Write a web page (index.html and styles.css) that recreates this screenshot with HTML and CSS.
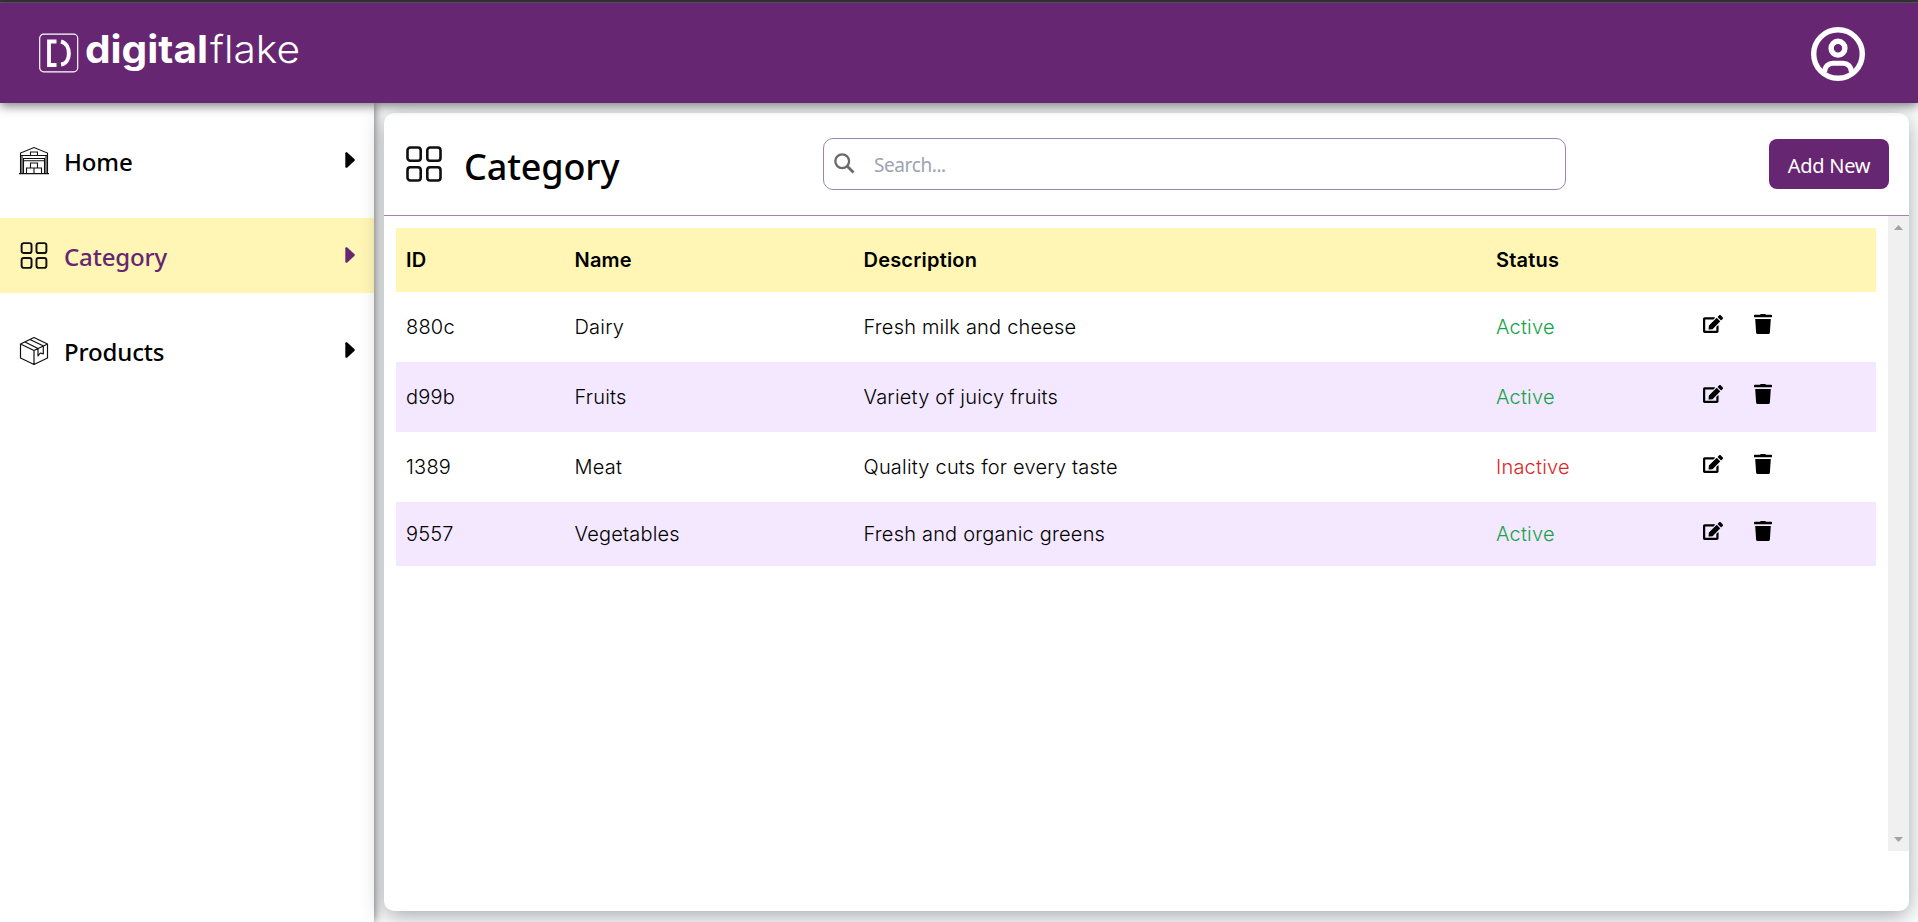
FILE: index.html
```html
<!DOCTYPE html>
<html lang="en">
<head>
<meta charset="utf-8">
<title>Category</title>
<link rel="stylesheet" href="styles.css">
</head>
<body>
<svg class="defs" width="0" height="0">
  <symbol id="grid" viewBox="0 0 36 36"><g fill="none" stroke="#101010" stroke-width="2.600"><rect x="1.500" y="1.500" width="13.200" height="13.200" rx="2.800"/><rect x="21.300" y="1.500" width="13.200" height="13.200" rx="2.800"/><rect x="1.500" y="21.300" width="13.200" height="13.200" rx="2.800"/><rect x="21.300" y="21.300" width="13.200" height="13.200" rx="2.800"/></g></symbol>
  <symbol id="edit" viewBox="0 0 576 512"><path d="M402.6 83.2l90.2 90.2c3.800 3.800 3.800 10 0 13.800L274.400 405.600l-92.800 10.300c-12.400 1.400-22.900-9.100-21.500-21.500l10.300-92.800L388.800 83.200c3.800-3.800 10-3.800 13.800 0zm162-22.900l-48.800-48.800c-15.200-15.200-39.900-15.200-55.200 0l-35.400 35.400c-3.800 3.800-3.800 10 0 13.800l90.200 90.200c3.800 3.800 10 3.800 13.800 0l35.400-35.400c15.200-15.300 15.200-40 0-55.200zM384 346.200V448H64V128h229.800c3.200 0 6.200-1.300 8.500-3.500l40-40c7.600-7.600 2.200-20.500-8.500-20.500H48C21.500 64 0 85.500 0 112v352c0 26.500 21.500 48 48 48h352c26.500 0 48-21.500 48-48V306.200c0-10.700-12.900-16-20.500-8.500l-40 40c-2.200 2.300-3.500 5.300-3.500 8.500z"/></symbol>
  <symbol id="trash" viewBox="0 0 18 20"><path d="M6 .8Q6.200 0 7 0h4q.8 0 1 .8h5.200q.8 0 .8.700v1.200q0 .6-.8.600H.800Q0 3.300 0 2.700V1.500Q0 .8.800.8ZM1.200 5h15.600l-.9 13.500Q15.800 20 14.300 20H3.700Q2.200 20 2.100 18.500Z"/></symbol>
  <symbol id="caret" viewBox="0 0 10 16"><path d="M.3 1.300C.3.200 1.500-.2 2.300.500L9.300 6.900q1 1 0 2L2.300 15.500C1.500 16.200.3 15.800.3 14.700Z" fill="currentColor"/></symbol>
</svg>
<div class="strip"></div>
<header class="topbar">
  <svg class="logo" width="270" height="64" viewBox="0 -12 270 64">
    <rect x=".7" y="2.200" width="38" height="37.600" rx="4" fill="none" stroke="#fff" stroke-width="1.200"/>
    <path d="M17.500 9.500H10V33H17.500" fill="none" stroke="#fff" stroke-width="3.800"/>
    <path d="M22 9.500C32.500 12 32.500 31 22 32.500" fill="none" stroke="#fff" stroke-width="4"/>
    <text class="logo-bold" x="46" y="31" textLength="123" lengthAdjust="spacingAndGlyphs">digital</text>
    <text class="logo-light" x="171" y="31" textLength="90" lengthAdjust="spacingAndGlyphs">flake</text>
  </svg>
  <svg class="avatar" width="54" height="54" viewBox="0 0 54 54" fill="none" stroke="#fff">
    <circle cx="27" cy="27" r="24.300" stroke-width="5.400"/>
    <circle cx="27" cy="21.200" r="6.900" stroke-width="5.400"/>
    <path d="M13.500 45C14 39 17.500 36.200 22 36.200H32C36.500 36.200 40 39 40.500 45" stroke-width="5"/>
  </svg>
</header>
<div class="body">
  <nav class="sidebar">
    <a class="item">
      <svg class="item-icon" width="30" height="30" viewBox="0 0 30 30" fill="none" stroke="#111" stroke-width="1.100"><path d="M1.500 27.500V7L15 1.500 28.500 7V27.500M0 27.600H30M1.500 9.500H28.500M4.500 27V12.500H25.500V27M4.500 14.800H25.500M11.500 9V6H18.500V9M11.500 22V17H18.500V22M7.500 27V22H22.500V27M15 22V27M3 10V27M27 10V27"/></svg>
      <span class="label">Home</span><svg class="caret" width="10" height="16"><use href="#caret"/></svg>
    </a>
    <a class="item active">
      <svg class="item-icon" width="30" height="27"><use href="#grid"/></svg>
      <span class="label">Category</span><svg class="caret" width="10" height="16"><use href="#caret"/></svg>
    </a>
    <a class="item">
      <svg class="item-icon" width="30" height="30" viewBox="0 0 30 30" fill="none" stroke="#111" stroke-width="1.200" stroke-linejoin="round"><path d="M15 1.500 28.500 8V22L15 28.500 1.500 22V8ZM1.500 8 15 14.500 28.500 8M15 14.500V28.500M11 3.500 24.500 10M6 6 19 12.500M19 12.700V20L21.300 17 24.300 17.800V10.200"/></svg>
      <span class="label products">Products</span><svg class="caret" width="10" height="16"><use href="#caret"/></svg>
    </a>
  </nav>
  <main class="main">
    <section class="card">
      <div class="card-head">
        <svg class="title-icon" width="36" height="36"><use href="#grid"/></svg>
        <h1 class="title">Category</h1>
        <div class="search">
          <svg width="21" height="21" viewBox="0 0 21 21" fill="none" stroke="#6b6b6b" stroke-width="2.300"><circle cx="8.200" cy="8.200" r="6.900"/><path d="M13 13 19.500 19.500" stroke-width="2.800"/></svg>
          <span class="placeholder">Search...</span>
        </div>
        <button class="add">Add New</button>
      </div>
      <div class="scroller">
        <div class="table">
          <div class="row head"><span>ID</span><span>Name</span><span>Description</span><span>Status</span><span></span></div>
          <div class="row"><span>880c</span><span>Dairy</span><span>Fresh milk and cheese</span><span class="on">Active</span><span class="actions"><svg class="edit"><use href="#edit"/></svg><svg class="trash"><use href="#trash"/></svg></span></div>
          <div class="row alt"><span>d99b</span><span>Fruits</span><span>Variety of juicy fruits</span><span class="on">Active</span><span class="actions"><svg class="edit"><use href="#edit"/></svg><svg class="trash"><use href="#trash"/></svg></span></div>
          <div class="row"><span>1389</span><span>Meat</span><span>Quality cuts for every taste</span><span class="off">Inactive</span><span class="actions"><svg class="edit"><use href="#edit"/></svg><svg class="trash"><use href="#trash"/></svg></span></div>
          <div class="row alt last"><span>9557</span><span>Vegetables</span><span>Fresh and organic greens</span><span class="on">Active</span><span class="actions"><svg class="edit"><use href="#edit"/></svg><svg class="trash"><use href="#trash"/></svg></span></div>
        </div>
        <div class="track">
          <svg width="9" height="5" viewBox="0 0 9 5"><path d="M4.500 0 9 5H0Z" fill="#a3a3a3"/></svg>
          <svg width="9" height="5" viewBox="0 0 9 5"><path d="M0 0H9L4.500 5Z" fill="#a3a3a3"/></svg>
        </div>
      </div>
    </section>
  </main>
</div>
</body>
</html>
```
FILE: styles.css
```css
* { box-sizing: border-box; }
body { margin: 0; height: 922px; overflow: hidden; display: flex; flex-direction: column; background: #fff; font-family: "Noto Sans", "Open Sans", sans-serif; color: #000; }
.defs { position: absolute; }
.strip { height: 3px; flex: none; background: #353535; border-bottom: 1px solid #5f5a62; }
.topbar { height: 100px; flex: none; display: flex; justify-content: space-between; align-items: flex-start; padding: 24px 53px 0 39px; background: #662671; box-shadow: 0 3px 10px rgba(0, 0, 0, .5); z-index: 3; }
.logo { margin-top: -7px; fill: #fff; }
.logo text { font-family: Inter, sans-serif; font-size: 38px; }
.logo-bold { font-weight: 700; }
.logo-light { font-weight: 350; }
.avatar { flex: none; }
.body { flex: 1; display: flex; min-height: 0; }
.sidebar { width: 374px; padding-top: 20px; display: flex; flex-direction: column; gap: 20px; background: #fff; box-shadow: 0 0 10px rgba(0, 0, 0, .65); }
.item { height: 75px; display: flex; align-items: center; padding: 0 19px 0 19px; }
.item-icon { flex: none; }
.label { flex: 1; padding: 2px 0 0 15px; font-size: 24px; line-height: 36px; font-weight: 500; letter-spacing: -.15px; }
.caret { margin-top: -2px; }
.active { background: #fff6b6; color: #662671; }
.main { flex: 1; padding: 10px 9px 11px 10px; }
.card { height: 798px; border-radius: 10px; background: #fff; box-shadow: 0 5px 22px rgba(30, 45, 50, .42); }
.card-head { height: 103px; border-bottom: 1px solid #a084b0; display: flex; align-items: flex-start; padding: 25px 20px 0 22px; }
.title-icon { margin-top: 8px; }
.title { width: 358px; margin: 7px 0 0 22px; font-size: 36px; line-height: 44px; font-weight: 500; letter-spacing: -.15px; }
.search { width: 743px; height: 52px; margin-left: 1px; display: flex; align-items: center; padding-left: 10px; border: 1px solid #a084b0; border-radius: 10px; }
.search svg { margin-top: -1px; }
.placeholder { padding: 2px 0 0 19px; font-size: 19px; color: #9ca3af; letter-spacing: -.4px; }
.add { width: 120px; height: 50px; margin: 1px 0 0 auto; padding: 2px 0 0; border: 0; border-radius: 8px; background: #662671; color: #fff; font: 400 20px "Noto Sans", sans-serif; letter-spacing: -.3px; }
.scroller { height: 635px; display: flex; justify-content: space-between; }
.table { width: 1480px; margin: 12px 0 0 12px; font: 300 20px/24px Inter, sans-serif; letter-spacing: .2px; }
.row { height: 70px; display: grid; grid-template-columns: 168.500px 289px 632.500px 207px 1fr; align-items: center; padding: 0 10px; }
.head { height: 64px; background: #fff6b6; font-weight: 600; }
.alt { background: #f3e8ff; }
.last { height: 64px; }
.on { color: #16a34a; }
.off { color: #dc2626; }
.actions { display: flex; align-items: center; gap: 31px; margin-top: -6px; }
.edit { width: 20px; height: 18px; }
.trash { width: 18px; height: 20px; }
.track { width: 21px; background: #f0f0f0; display: flex; flex-direction: column; align-items: center; justify-content: space-between; padding: 9px 0; }
```
